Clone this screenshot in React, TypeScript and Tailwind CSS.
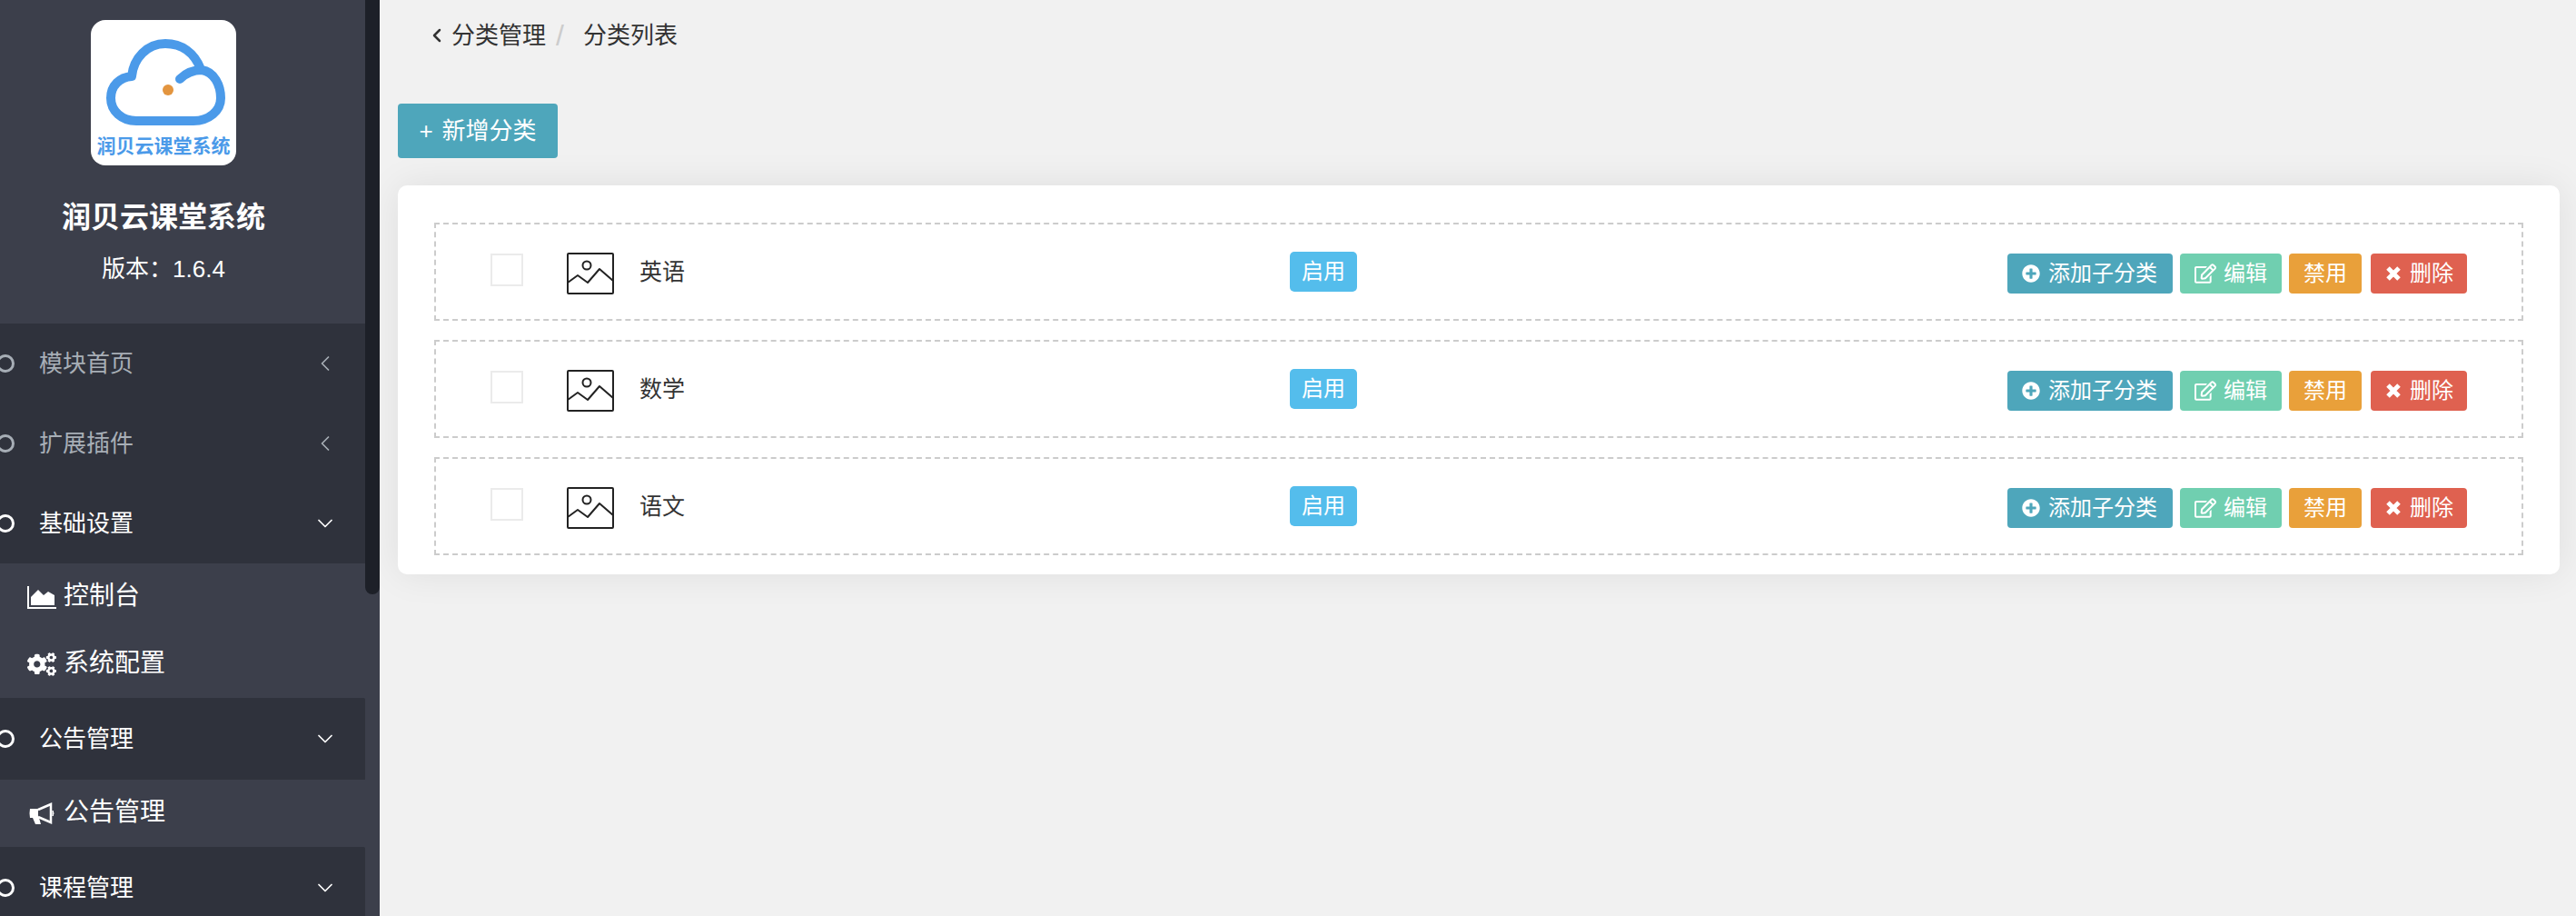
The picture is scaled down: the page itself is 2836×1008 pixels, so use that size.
import { ChevronDown, ChevronLeft } from "lucide-react";
import { FaCogs, FaPlusCircle, FaRegEdit } from "react-icons/fa";

const font = "font-['Liberation_Sans','Noto_Sans_CJK_SC',sans-serif]";

function Logo() {
  return (
    <div className="flex h-[160px] w-[160px] flex-col items-center overflow-hidden rounded-[16px] bg-white">
      <svg viewBox="0 0 160 126" className="h-[126px] w-[160px] shrink-0" fill="none">
        <path
          d="M98 65C106 57 114 55 122 55C136 57 143 72 143 86C143 100 130 111 113 111L50 111C34 111 22 100 22 86C22 72 32 63 45 62C47 42 62 26 82 26C100 26 114 36 121 54"
          stroke="#4b9ae9"
          strokeWidth="10"
          strokeLinecap="round"
          strokeLinejoin="round"
        />
        <circle cx="85" cy="77" r="6" fill="#e3953f" />
      </svg>
      <div className="text-[21px] leading-[26px] font-bold whitespace-nowrap text-[#4b9ae9]">润贝云课堂系统</div>
    </div>
  );
}

function AreaChartIcon() {
  return (
    <svg viewBox="0 0 32 25" className="h-[25px] w-[32px]">
      <path d="M1 0V24H32" fill="none" stroke="currentColor" strokeWidth="2" />
      <path d="M4 21V12L12 4L18 10L23 6L30 10V21Z" fill="currentColor" />
    </svg>
  );
}

function BullhornIcon() {
  return (
    <svg viewBox="0 0 29 25" className="h-[25px] w-[29px]">
      <path d="M1 7H10V17H1Q0 12 1 7ZM4 17H11L13 24H7Z" fill="currentColor" />
      <path d="M10 8L24 2V22L10 16" fill="none" stroke="currentColor" strokeWidth="2.5" />
      <path d="M26 9Q28 12 26 15Z" fill="currentColor" stroke="currentColor" />
    </svg>
  );
}

function TopItem({ label, open, active = true, last = false }: { label: string; open?: boolean; active?: boolean; last?: boolean }) {
  const color = active ? "text-white" : "text-[#a7aeb6]";
  return (
    <div className={`flex w-[402px] shrink-0 items-center ${last ? "h-[90px]" : "h-[88px]"} ${color}`}>
      <span className="-ml-[4px] h-[20px] w-[20px] shrink-0 rounded-full border-[3px] border-current" />
      <span className="ml-[27px] text-[26px] leading-none">{label}</span>
      <span className="mr-[30px] ml-auto flex h-[28px] w-[28px] items-center justify-center">
        {open ? <ChevronDown size={28} strokeWidth={1.5} /> : <ChevronLeft size={28} strokeWidth={1.5} />}
      </span>
    </div>
  );
}

function SubItem({ label, icon }: { label: string; icon: React.ReactNode }) {
  return (
    <div className="flex h-[74px] shrink-0 items-center pl-[30px] text-white">
      <span className="flex w-[32px] shrink-0 items-center justify-center">{icon}</span>
      <span className="-mt-[2px] ml-[8px] text-[28px] leading-none">{label}</span>
    </div>
  );
}

function Sidebar() {
  return (
    <aside className="relative flex h-[1008px] w-[418px] shrink-0 flex-col overflow-hidden bg-[#3c3f4b]">
      <div className="flex h-[356px] w-[360px] shrink-0 flex-col items-center pt-[22px] text-white">
        <Logo />
        <div className="mt-[37px] text-[32px] leading-[40px] font-bold whitespace-nowrap">润贝云课堂系统</div>
        <div className="mt-[19px] text-[26px] leading-[36px] whitespace-nowrap">版本：1.6.4</div>
      </div>
      <div className="w-[402px] bg-[#2f323c]">
        <TopItem label="模块首页" active={false} />
        <TopItem label="扩展插件" active={false} />
        <TopItem label="基础设置" open />
      </div>
      <SubItem label="控制台" icon={<AreaChartIcon />} />
      <SubItem label="系统配置" icon={<FaCogs className="text-[32px]" />} />
      <div className="w-[402px] rounded-tr-[2px] bg-[#2f323c]">
        <TopItem label="公告管理" open last />
      </div>
      <SubItem label="公告管理" icon={<BullhornIcon />} />
      <div className="w-[402px] rounded-tr-[2px] bg-[#2f323c]">
        <TopItem label="课程管理" open last />
      </div>
      <div className="absolute top-0 right-0 h-[654px] w-[16px] rounded-b-[8px] bg-[#1d2028]" />
    </aside>
  );
}

function ImageIcon() {
  return (
    <svg viewBox="0 0 52 46" className="h-[46px] w-[52px] shrink-0" fill="none" stroke="#222" strokeWidth="2">
      <rect x="1" y="1" width="50" height="44" rx="1" />
      <circle cx="22" cy="14" r="4.5" />
      <path d="M1 33L12 25L23 33L36 18L51 31" strokeLinejoin="round" />
    </svg>
  );
}

function CloseIcon() {
  return (
    <svg viewBox="0 0 18 18" className="h-[18px] w-[18px] shrink-0">
      <path d="M3 3L15 15M15 3L3 15" stroke="currentColor" strokeWidth="5" />
    </svg>
  );
}

function ActionButton({ className, children }: { className: string; children: React.ReactNode }) {
  return (
    <button className={`flex h-[44px] items-center rounded-[4px] text-[24px] leading-none whitespace-nowrap text-white ${className}`}>
      {children}
    </button>
  );
}

function CategoryRow({ name }: { name: string }) {
  return (
    <div className="flex h-[108px] items-center border-2 border-dashed border-[#cccccc] px-[60px]">
      <div className="flex w-[880px] shrink-0 items-center">
        <span className="-mt-[4px] h-[36px] w-[36px] shrink-0 border-2 border-[#ebebeb] bg-white" />
        <span className="mt-[4px] ml-[48px]">
          <ImageIcon />
        </span>
        <span className="ml-[28px] text-[25px] leading-none text-[#333]">{name}</span>
      </div>
      <span className="flex h-[44px] w-[74px] items-center justify-center rounded-[5px] bg-[#54bdec] text-[24px] leading-none text-white">
        启用
      </span>
      <div className="mt-[4px] ml-auto flex items-center gap-2">
        <ActionButton className="gap-[9px] bg-[#4ea6bb] pr-[17px] pl-4">
          <FaPlusCircle className="text-[20px]" />
          添加子分类
        </ActionButton>
        <ActionButton className="gap-2 bg-[#70cfb0] px-4">
          <FaRegEdit className="text-[24px]" />
          编辑
        </ActionButton>
        <ActionButton className="bg-[#e9a03a] px-4">禁用</ActionButton>
        <ActionButton className="ml-[2px] gap-[9px] bg-[#df6150] pr-[15px] pl-[16px]">
          <CloseIcon />
          删除
        </ActionButton>
      </div>
    </div>
  );
}

export default function App() {
  return (
    <div className={`flex h-[1008px] w-[2836px] overflow-hidden bg-[#f1f1f1] ${font}`}>
      <Sidebar />
      <main className="flex min-w-0 flex-1 flex-col pr-[18px] pl-[20px]">
        <nav className="flex h-[76px] shrink-0 items-center pt-[2px] pl-[31px] text-[26px] leading-none text-[#333]">
          <ChevronLeft size={24} strokeWidth={2.5} className="shrink-0" />
          <span className="ml-[4px]">分类管理</span>
          <span className="ml-[11px] text-[32px] text-[#ccc]">/</span>
          <span className="ml-[21px]">分类列表</span>
        </nav>
        <div className="mt-[38px] shrink-0">
          <button className="flex h-[60px] w-[176px] items-center justify-center gap-[10px] rounded-[4px] bg-[#4ea6bb] text-[26px] leading-none text-white">
            <span>+</span>
            <span>新增分类</span>
          </button>
        </div>
        <section className="mt-[30px] flex flex-col gap-[21px] rounded-[10px] bg-white px-[40px] pt-[41px] pb-[21px] shadow-[0_0_40px_rgba(0,0,0,0.08)]">
          <CategoryRow name="英语" />
          <CategoryRow name="数学" />
          <CategoryRow name="语文" />
        </section>
      </main>
    </div>
  );
}
